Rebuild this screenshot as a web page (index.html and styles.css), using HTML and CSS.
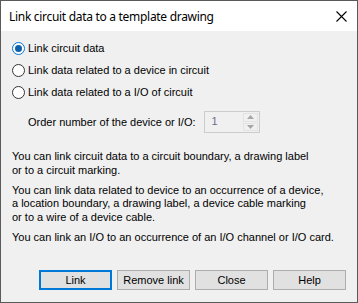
FILE: index.html
```html
<!DOCTYPE html>
<html lang="en">
<head>
    <meta charset="UTF-8">
    <meta name="viewport" content="width=device-width, initial-scale=1.0">
    <title>Link circuit data to a template drawing</title>
    <link rel="stylesheet" href="styles.css">
</head>
<body>
    <section class="window">
        <header class="titlebar">
            <h1 class="title">Link circuit data to a template drawing</h1>
            <svg class="close" width="11" height="11" viewBox="0 0 11 11">
                <path d="M0.5 0.5 L10.5 10.5 M10.5 0.5 L0.5 10.5" stroke="#000" stroke-width="1.1" fill="none"/>
            </svg>
        </header>
        <div class="content">
            <label class="option">
                <span class="radio checked"></span>
                <span>Link circuit data</span>
            </label>
            <label class="option">
                <span class="radio"></span>
                <span>Link data related to a device in circuit</span>
            </label>
            <label class="option">
                <span class="radio"></span>
                <span>Link data related to a I/O of circuit</span>
            </label>

            <div class="order">
                <span>Order number of the device or I/O:</span>
                <div class="spin">
                    <span class="spin-value">1</span>
                    <div class="spin-buttons">
                        <span class="spin-btn"><svg width="7" height="4" viewBox="0 0 7 4"><path d="M3.5 0 L7 4 L0 4 Z" fill="#a6a6a6"/></svg></span>
                        <span class="spin-btn"><svg width="7" height="4" viewBox="0 0 7 4"><path d="M0 0 L7 0 L3.5 4 Z" fill="#a6a6a6"/></svg></span>
                    </div>
                </div>
            </div>

            <p class="info">You can link circuit data to a circuit boundary, a drawing label<br>or to a circuit marking.</p>
            <p class="info">You can link data related to device to an occurrence of a device,<br>a location boundary, a drawing label, a device cable marking<br>or to a wire of a device cable.</p>
            <p class="info">You can link an I/O to an occurrence of an I/O channel or I/O card.</p>
        </div>
        <footer class="buttons">
            <button class="btn default">Link</button>
            <button class="btn">Remove link</button>
            <button class="btn">Close</button>
            <button class="btn">Help</button>
        </footer>
    </section>
</body>
</html>
```

FILE: styles.css
```css
* {
    margin: 0px;
    padding: 0px;
    box-sizing: border-box;
}

body {
    background-color: #f0f0f0;
    font-family: "Liberation Sans", Arial, sans-serif;
    font-size: 11px;
    color: #000;
}

.window {
    width: 358px;
    height: 303px;
    border: 1px solid #5a5a5a;
    display: flex;
    flex-direction: column;
    background-color: #f0f0f0;
}

.titlebar {
    height: 30px;
    background-color: #fff;
    display: flex;
    align-items: center;
    justify-content: space-between;
    padding: 0 10px 0 8px;
}

.title {
    font-family: "Noto Sans", sans-serif;
    font-weight: normal;
    font-size: 12px;
    letter-spacing: -0.3px;
    color: #000;
}

.close {
    display: block;
}

.content {
    padding: 6px 11px 0 11px;
}

.option {
    display: flex;
    align-items: center;
    height: 22px;
    gap: 3px;
}

.radio {
    width: 13px;
    height: 13px;
    border: 1px solid #333;
    border-radius: 50%;
    background-color: #fff;
    display: flex;
    align-items: center;
    justify-content: center;
}

.radio.checked {
    border-color: #0078d7;
}

.radio.checked::after {
    content: "";
    width: 7px;
    height: 7px;
    border-radius: 50%;
    background-color: #0f5ea8;
}

.order {
    display: flex;
    align-items: center;
    gap: 8px;
    height: 22px;
    margin-top: 8px;
    padding-left: 16px;
}

.spin {
    width: 56px;
    height: 22px;
    border: 1px solid #cccccc;
    display: flex;
    justify-content: space-between;
}

.spin-value {
    color: #6d6d8a;
    padding: 3px 0 0 7px;
}

.spin-buttons {
    width: 17px;
    display: flex;
    flex-direction: column;
    gap: 1px;
    padding: 1px;
    background-color: #f0f0f0;
}

.spin-btn {
    flex: 1;
    border: 1px solid #e3e3e3;
    display: flex;
    align-items: center;
    justify-content: center;
}

.info {
    line-height: 13.5px;
    margin-top: 6.5px;
}

.order + .info {
    margin-top: 17px;
}

.buttons {
    margin-top: auto;
    display: flex;
    justify-content: flex-end;
    gap: 5px;
    padding: 0 11px 12px 0;
}

.btn {
    width: 73px;
    height: 20px;
    border: 1px solid #adadad;
    background-color: #e1e1e1;
    font-family: "Liberation Sans", Arial, sans-serif;
    font-size: 11px;
    color: #000;
}

.btn.default {
    border: 2px solid #0078d7;
}
```
